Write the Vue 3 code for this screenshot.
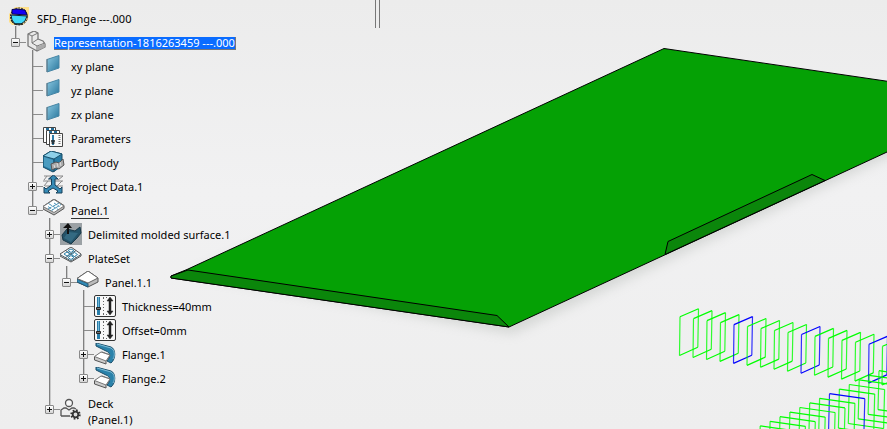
<script setup>
// Specification tree, listed top to bottom; `depth` is the nesting level.
const nodes = [
  { label: 'SFD_Flange ---.000', icon: 'product', depth: 0 },
  { label: 'Representation-1816263459 ---.000', icon: 'part', depth: 1, toggle: 'open', selected: true },
  { label: 'xy plane', icon: 'plane', depth: 2 },
  { label: 'yz plane', icon: 'plane', depth: 2 },
  { label: 'zx plane', icon: 'plane', depth: 2 },
  { label: 'Parameters', icon: 'parameters', depth: 2 },
  { label: 'PartBody', icon: 'body', depth: 2 },
  { label: 'Project Data.1', icon: 'project', depth: 2, toggle: 'closed' },
  { label: 'Panel.1', icon: 'panel', depth: 2, toggle: 'open', active: true },
  { label: 'Delimited molded surface.1', icon: 'surface', depth: 3, toggle: 'closed' },
  { label: 'PlateSet', icon: 'plateset', depth: 3, toggle: 'open' },
  { label: 'Panel.1.1', icon: 'plate', depth: 4, toggle: 'open' },
  { label: 'Thickness=40mm', icon: 'length', depth: 5 },
  { label: 'Offset=0mm', icon: 'length', depth: 5 },
  { label: 'Flange.1', icon: 'flange', depth: 5, toggle: 'closed' },
  { label: 'Flange.2', icon: 'flange', depth: 5, toggle: 'closed' },
  { label: 'Deck', note: '(Panel.1)', icon: 'deck', depth: 3, toggle: 'closed' },
]

// True when a later node shares the same parent at the given depth.
function continues(index, depth) {
  for (let i = index + 1; i < nodes.length; i++) {
    if (nodes[i].depth < depth) return false
    if (nodes[i].depth === depth) return true
  }
  return false
}

const rows = nodes.map((node, index) => ({
  ...node,
  guides: Array.from({ length: node.depth }, (_, g) => ({
    own: g === node.depth - 1,
    line: g === node.depth - 1 || continues(index, g + 1),
    last: !continues(index, g + 1),
    first: nodes[index - 1].depth === g,
  })),
}))

const frames = Array.from({ length: 17 }, (_, i) => {
  const x = 680 + i * 13.5
  const y = 316.7 + i * 1.97
  return { blue: i % 5 === 4, top: `M${x} ${y}l18.5-8M${x - 0.5} ${y + 38.8}l18.3-8.2`, side: `M${x} ${y}l-.5 38.8M${x + 18.5} ${y - 8}l-.7 38.6` }
})

const girders = Array.from({ length: 14 }, (_, i) => {
  const x = 879 - i * 9.9
  const y = 370.7 + i * 4.6
  return { blue: i === 5, top: `M${x} ${y}l35.3 5M${x - 1} ${y + 39}l35.3 5`, side: `M${x} ${y}l-1 39M${x + 35.3} ${y + 5}l-1 39` }
})

const wires = [...frames, ...girders]
</script>

<template>
  <main class="viewer">
    <svg class="scene" viewBox="0 0 887 429" preserveAspectRatio="xMinYMin slice" role="img" aria-label="3D view of the panel">
      <defs>
        <filter id="soft" x="-10%" y="-10%" width="120%" height="120%"><feGaussianBlur stdDeviation="6" /></filter>
      </defs>
      <path class="shadow" d="M190 274L664 70l260 40v30L512 334z" filter="url(#soft)" />
      <path class="plate" d="M171 276L187 269.500L664 48.500L940 89V127.500L509 327L171 278z" />
      <path class="fold" d="M171 276L188 270L497 315.500L509 327L171 278z" />
      <path class="fold" d="M665 254.500L668 241.500L812 174.500L825 180.500z" />
      <path class="divider" d="M375.500 0V28M379.500 0V28" />
      <g v-for="(w, i) in wires" :key="i" class="wire" :class="{ blue: w.blue }">
        <path class="side" :d="w.side" />
        <path :d="w.top" />
      </g>
    </svg>

    <svg class="symbols" width="0" height="0" aria-hidden="true">
      <linearGradient id="steel" x1="0" y1="0" x2="1" y2="1">
        <stop offset="0" stop-color="#8cc9e2" /><stop offset="1" stop-color="#28769c" />
      </linearGradient>
      <symbol id="product" viewBox="0 0 22 22">
        <path d="M6 0h14v7l-1 6-5 5H3l-3-3V7z" fill="#ffe08a" />
        <circle cx="10" cy="9.500" r="8.500" fill="#fff0b0" stroke="#222" stroke-dasharray="2 1" />
        <path d="M3 2.500L8 2l8 1 2 5-15-1z" fill="#1400f5" stroke="#050550" />
        <path d="M2 8l16 1-2 5-4 3H6l-3-4z" fill="#3fd8f8" stroke="#123" />
        <path d="M5 17h9M2 13l2 3" stroke="#111" fill="none" />
      </symbol>
      <symbol id="part" viewBox="0 0 22 22">
        <path d="M2 3l6-3 4 2v6l5 2 2 3v3l-8 4-9-5z" fill="#e9e9e9" stroke="#777" stroke-width="1.300" stroke-linejoin="round" />
        <path d="M2 3l4 2v7l5 3 8-3M6 5l6-3M11 15v5M6 12l6-4" fill="none" stroke="#777" />
        <path d="M11.500 15.500l7-3v4l-7 3z" fill="#aaa" />
      </symbol>
      <symbol id="plane" viewBox="0 0 22 22">
        <path d="M4 4.500L16 .500V13L4 17z" fill="url(#steel)" stroke="#4685a5" />
        <path d="M4 4v13" stroke="#667b86" />
      </symbol>
      <symbol id="parameters" viewBox="0 0 22 22">
        <path d="M.5 .5h12v15H.5z" fill="#fff" stroke="#444" />
        <path d="M3 2h3M8 2h3" stroke="#246d98" stroke-width="2" />
        <path d="M3.500 3.500h13v14h-13z" fill="#fff" stroke="#444" />
        <path d="M6 5h3M11 5h3" stroke="#246d98" stroke-width="2" />
        <path d="M6.500 6.500h13v13h-13z" fill="#fafafa" stroke="#444" />
        <path d="M10 8v10" stroke="#2b7baa" stroke-width="2" />
        <path d="M8 14h4M8.500 16h3" stroke="#222" stroke-width="1.500" />
        <path d="M16.500 8v10" stroke="#777" stroke-width="2" stroke-dasharray="1 1" />
      </symbol>
      <symbol id="body" viewBox="0 0 22 22">
        <path d="M0 5L8 0l11 3v12l-9 6L0 16z" fill="#287ca5" stroke="#164a65" />
        <path d="M0 5L8 0l11 3-8 5z" fill="#8ed0e9" stroke="#1b536e" />
        <path d="M11 8v13" stroke="#164a65" />
        <path d="M1 6l9 3v10L1 15z" fill="#4b9cc0" />
        <path d="M8 13l5-2 3 1 4-4 1 6-5 4-3-1-4 2z" fill="#aaa" stroke="#555" />
        <path d="M11 14l1 3M14 12l1 4M17 11l1 4" stroke="#ddd" />
      </symbol>
      <symbol id="project" viewBox="0 0 22 22">
        <path d="M1 5l3-4M8 5l3-4M15 5l5-4M1 1h19M0 6h20M2 11h18M1 11l4-5M14 11l5-5" fill="none" stroke="#888" />
        <path d="M10.500 0l4.500 4h-3v6l5 4 2-2v6h-6l2-2-5-3-5 3 2 2H1v-6l2 2 5.500-4V4h-3z" fill="#368bb6" stroke="#163f58" stroke-linejoin="round" />
      </symbol>
      <symbol id="panel" viewBox="0 0 22 22">
        <path d="M0 7.500L11 0l10 6.500v3L11 16 0 10z" fill="#bbb" stroke="#555" />
        <path d="M0 7.500L11 .500l10 6.500-10 6.500z" fill="#fff" stroke="#777" />
        <path d="M5.500 4.500L15 10.500M11 4l5.500 3.500M5 7.500l5 3.500M5 10l11-6M8.500 11.500L18 5.500" stroke="#4a93b8" stroke-dasharray="4 1" fill="none" />
      </symbol>
      <symbol id="surface" viewBox="0 0 22 22">
        <path d="M0 0h22v22H0z" fill="#9ba1a5" />
        <path d="M2 12l5-6 8 2 5-4 1 6-4 5-6 6-8-4z" fill="#245369" stroke="#183848" />
        <path d="M8 9l10 1-7 9-7-4z" fill="#346a82" />
        <path d="M7 11V5H3l5-5 4 5h-3v6z" fill="#111" />
      </symbol>
      <symbol id="plateset" viewBox="0 0 22 22">
        <path d="M0 7L11 0l10 7v2L11 15 0 9z" fill="#f7f7f7" stroke="#555" />
        <path d="M0 7.500l11 6.500 10-6.500M5.500 3.500l10.500 7M5 11l11-7.500" stroke="#4b5f69" fill="none" />
        <path d="M4 7l3-2 3 2-3 2zM11.500 7.500l3-2 3 2-3 2zM8 3.500l3-1.500 3 1.500-3 2zM8 10.500l3-2 3 2-3 2z" fill="#fff" stroke="#2f83aa" />
      </symbol>
      <symbol id="plate" viewBox="0 0 22 22">
        <path d="M0 7.500L11 0l10 7v4L11 16 0 11z" fill="#bbb" stroke="#555" stroke-linejoin="round" />
        <path d="M0 8l11 4.500V16L0 11z" fill="#3189b5" stroke="#215672" />
        <path d="M0 7.500L11 0l10 7-10 5z" fill="#fff" stroke="#666" />
      </symbol>
      <symbol id="length" viewBox="0 0 22 22">
        <rect x=".5" y=".5" width="21" height="21" rx="1.500" fill="#f8f8f8" stroke="#333" />
        <path d="M4.500 2v18" stroke="#287da9" stroke-width="3" />
        <path d="M4.500 2v10" stroke="#74b6d5" />
        <path d="M2.500 12.500h4v2h-4z" fill="#777" stroke="#222" />
        <path d="M9.500 3v17M9 2.500h4M9 19.500h4" stroke="#666" stroke-dasharray="1 2" />
        <path d="M16 2l3 4h-2v10h2l-3 4-3-4h2V6h-2z" fill="#222" stroke="#222" stroke-width=".5" />
      </symbol>
      <symbol id="flange" viewBox="0 0 22 22">
        <path d="M2 0l15 4c5 2 5 12 0 16l-4-2c4-4 3-9-1-10L2 3z" fill="#2b82aa" stroke="#1b4f6b" />
        <path d="M3 1l14 4c4 2 4 8 2 11" stroke="#80bdd6" fill="none" />
        <path d="M.5 14L8 9l8 3-4 6v3L.5 17z" fill="#ccc" stroke="#555" stroke-linejoin="round" />
        <path d="M.5 13.500L7 9l9 3-4 6z" fill="#fff" stroke="#777" />
      </symbol>
      <symbol id="deck" viewBox="0 0 22 22">
        <circle cx="9" cy="5" r="3.500" fill="#f7f7f7" stroke="#555" stroke-width="1.300" />
        <path d="M1 18v-6l3-2h2l3 2 3-2h2l2 1M1 18h9" fill="none" stroke="#555" stroke-width="1.300" />
        <circle cx="15.500" cy="16.500" r="4.200" fill="none" stroke="#333" stroke-width="2" stroke-dasharray="1.650 1.650" />
        <circle cx="15.500" cy="16.500" r="2.800" fill="#ddd" stroke="#333" stroke-width="1.800" />
      </symbol>
    </svg>

    <ul class="tree" role="tree" aria-label="Specification tree">
      <li
        v-for="row in rows"
        :key="row.label"
        class="row"
        :class="{ tall: row.note }"
        role="treeitem"
        :aria-level="row.depth + 1"
        :aria-selected="!!row.selected"
      >
        <span
          v-for="(guide, g) in row.guides"
          :key="g"
          class="guide"
          :class="{ line: guide.line, last: guide.own && guide.last, first: guide.first, branch: guide.own }"
        >
          <button
            v-if="guide.own && row.toggle"
            class="toggle"
            :class="row.toggle"
            type="button"
            :aria-label="(row.toggle === 'open' ? 'Collapse ' : 'Expand ') + row.label"
          ></button>
        </span>
        <svg class="icon" aria-hidden="true"><use :href="'#' + row.icon" /></svg>
        <span class="label">
          <span class="name" :class="{ selected: row.selected, active: row.active }">{{ row.label }}</span>
          <span v-if="row.note" class="note">{{ row.note }}</span>
        </span>
      </li>
    </ul>
  </main>
</template>

<style>
body {
  background: #efefef;
}
</style>

<style scoped>
.viewer {
  position: relative;
  min-height: 100vh;
  box-sizing: border-box;
  padding: 6px 0 1px 7px;
  overflow: hidden;
  background: linear-gradient(180deg, #ececec, #f1f1f2 45%, #eeeeee);
  font-family: "Noto Sans", sans-serif;
  font-size: 11px;
  color: #000;
}
.scene {
  position: absolute;
  inset: 0;
  width: 100%;
  height: 100%;
}
.symbols {
  position: absolute;
}
.shadow {
  fill: #9aa09a;
  opacity: 0.3;
}
.plate,
.fold {
  stroke: #000;
  stroke-width: 1;
  stroke-linejoin: round;
}
.plate {
  fill: #05a105;
}
.fold {
  fill: #0b860b;
}
.divider {
  stroke: #777;
}
.wire {
  fill: none;
  stroke: #0f0;
  stroke-width: 1.2;
}
.wire.blue {
  stroke: #00f;
}
.side {
  opacity: 0.8;
}
.tree {
  position: relative;
  margin: 0;
  padding: 0;
  list-style: none;
}
.row {
  display: flex;
  align-items: center;
  height: 24px;
}
.row.tall {
  height: 38px;
}
.guide {
  display: grid;
  place-items: center;
  align-self: stretch;
  flex: none;
  width: 17px;
  position: relative;
}
.guide.line::before {
  content: "";
  position: absolute;
  left: 8px;
  top: 0;
  bottom: 0;
  width: 1px;
  background: #808080;
  box-shadow: 1px 0 #cacaca;
}
.guide.first::before {
  top: -4px;
}
.guide.last::before {
  bottom: 50%;
}
.guide.branch::after {
  content: "";
  position: absolute;
  left: 9px;
  right: -2px;
  top: 50%;
  height: 1px;
  background: #8c8c8c;
}
.toggle {
  position: relative;
  z-index: 1;
  width: 9px;
  height: 9px;
  padding: 0;
  border: 1px solid #8a8a8a;
  border-radius: 1px;
  background:
    linear-gradient(#111, #111) center / 5px 1px no-repeat,
    linear-gradient(#fff, #d4d4d4);
}
.toggle.closed {
  background:
    linear-gradient(#111, #111) center / 5px 1px no-repeat,
    linear-gradient(#111, #111) center / 1px 5px no-repeat,
    linear-gradient(#fff, #d4d4d4);
}
.icon {
  position: relative;
  flex: none;
  width: 22px;
  height: 22px;
  margin: 0 6px 0 2px;
}
.label {
  display: flex;
  flex-direction: column;
  align-items: flex-start;
  padding-top: 2px;
  line-height: 16px;
  white-space: pre;
}
.tall .label {
  padding-top: 6px;
}
.name.selected {
  line-height: 12px;
  background: #0a6cff;
  color: #fff;
  border-right: 1px solid #777;
  border-bottom: 1px solid #777;
}
.name.active {
  line-height: 14px;
  border-bottom: 1px solid #333;
}
</style>
